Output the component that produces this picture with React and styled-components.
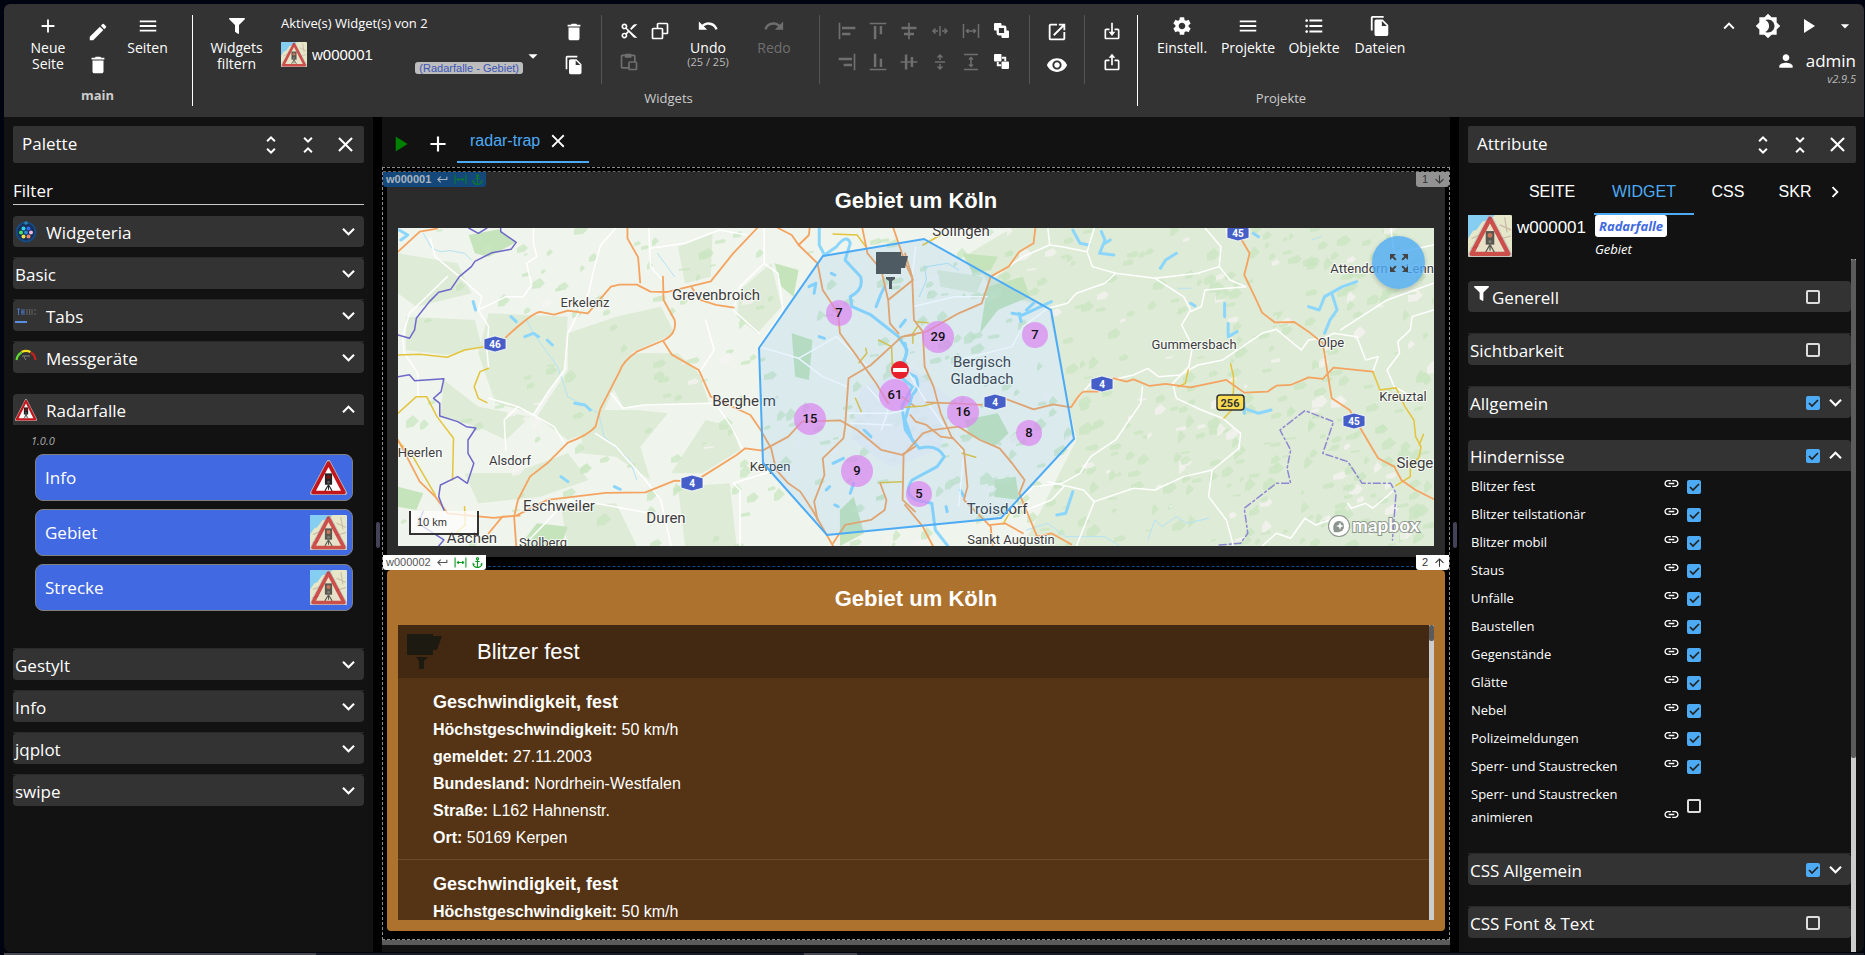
import React from "react";
import styled, { createGlobalStyle, css } from "styled-components";
import {
  MdAdd,
  MdEdit,
  MdDelete,
  MdMenu,
  MdFileCopy,
  MdUndo,
  MdRedo,
  MdOpenInNew,
  MdVisibility,
  MdSettings,
  MdFormatListBulleted,
  MdKeyboardArrowUp,
  MdKeyboardArrowDown,
  MdKeyboardArrowRight,
  MdBrightness4,
  MdPlayArrow,
  MdArrowDropDown,
  MdPerson,
  MdUnfoldMore,
  MdUnfoldLess,
  MdClose,
  MdLink,
  MdAnchor,
  MdKeyboardReturn,
  MdArrowDownward,
  MdArrowUpward,
  MdZoomOutMap,
  MdAlignHorizontalLeft,
  MdAlignHorizontalRight,
  MdAlignHorizontalCenter,
  MdAlignVerticalTop,
  MdAlignVerticalBottom,
  MdAlignVerticalCenter
} from "react-icons/md";
import { BiCut, BiCopy, BiPaste, BiImport, BiExport } from "react-icons/bi";
import { FaFilter } from "react-icons/fa";

const ui = `"Open Sans", "Noto Sans", sans-serif`;
const arial = `"Liberation Sans", Arial, sans-serif`;

const GlobalStyle = createGlobalStyle`
  * {
    box-sizing: border-box;
  }
  body {
    margin: 0;
    background: #000310;
    color: #fff;
    font-family: ${ui};
  }
  button, select, input {
    font: inherit;
    color: inherit;
    margin: 0;
  }
  button {
    background: none;
    border: 0;
    padding: 0;
    cursor: pointer;
  }
  svg {
    display: block;
    flex: none;
  }
`;

const Page = styled.div`
  display: flex;
  flex-direction: column;
  height: 100vh;
  padding: 4px 1px 0 4px;
  overflow: hidden;
`;

/* ---------- toolbar ---------- */

const Toolbar = styled.header`
  display: flex;
  height: 113px;
  flex: none;
  padding: 11px 8px 11px 0;
  background: #333;
  border-radius: 6px 6px 0 0;
`;

const ToolGroup = styled.section`
  display: flex;
  flex-direction: column;
  border-right: ${props => (props.$last ? "0" : "1px solid #fff")};
  padding: ${props => props.$padding};
`;

const ToolRow = styled.div`
  display: flex;
  height: 69px;
`;

const ToolTitle = styled.div`
  padding-top: ${props => (props.$bold ? 3 : 6)}px;
  text-align: center;
  font-size: 13px;
  line-height: 16px;
  color: #ccc;
  font-weight: ${props => (props.$bold ? 700 : 400)};
`;

const BigTool = styled.button`
  display: flex;
  flex-direction: column;
  align-items: center;
  justify-content: flex-start;
  width: ${props => props.$width}px;
  font-size: 14px;
  line-height: 16px;
  color: ${props => (props.disabled ? "#6f6f6f" : "#fff")};

  svg {
    height: 22px;
    margin-bottom: 3px;
  }
  small {
    font-size: 11px;
    line-height: 12px;
    color: #bbb;
  }
`;

const IconGrid = styled.div`
  display: grid;
  grid-template-columns: repeat(${props => props.$cols}, ${props => props.$width || 31}px);
  grid-auto-rows: ${props => props.$row || 31}px;
`;

const IconTool = styled.button`
  display: grid;
  place-items: center;
  color: ${props => (props.disabled ? "#6f6f6f" : "#fff")};
`;

const Divider = styled.div`
  width: 1px;
  background: #555;
  margin: 0 11px 0 12px;
`;

const Picker = styled.div`
  width: 264px;
  margin: 0 13px 0 18px;
`;

const PickerTitle = styled.label`
  display: block;
  font-size: 13px;
  line-height: 16px;
`;

const PickerRow = styled.div`
  display: flex;
  align-items: flex-start;
  padding-top: 11px;

  > svg:last-child {
    align-self: center;
    margin: 0 1px 4px -1px;
  }
`;

const WidgetSelect = styled.select`
  flex: 1;
  min-width: 0;
  height: 24px;
  margin-left: 5px;
  padding: 0;
  border: 0;
  appearance: none;
  background: transparent;
  font-family: ${arial};
  font-size: 15px;
`;

const PickerChip = styled.span`
  margin-top: 20px;
  padding: 0 4px;
  border-radius: 3px;
  background: #bdbdbd;
  color: #3b55b8;
  font-family: ${arial};
  font-size: 11px;
  line-height: 12px;
`;

const Account = styled.div`
  margin-left: auto;
  display: flex;
  flex-direction: column;
  align-items: flex-end;
`;

const AccountIcons = styled.div`
  display: flex;
  align-items: center;
  height: 22px;
  padding-right: 1px;
  gap: 15px;
`;

const AccountName = styled.div`
  display: flex;
  align-items: center;
  gap: 10px;
  margin-top: 12px;
  font-size: 17px;
  line-height: 24px;
`;

const Version = styled.div`
  font-size: 11px;
  line-height: 12px;
  font-style: italic;
  color: #bbb;
`;

/* ---------- workspace ---------- */

const Workspace = styled.div`
  flex: 1;
  min-height: 0;
  display: grid;
  grid-template-columns: 369px 9px minmax(0, 1fr) 9px 405px;
  grid-template-rows: minmax(0, 1fr);
`;

const Splitter = styled.div`
  display: grid;
  place-items: center;
  background: #000;

  &::after {
    content: "";
    width: 4px;
    height: 26px;
    border-radius: 2px;
    background: #444256;
  }
`;

const Panel = styled.aside`
  display: flex;
  flex-direction: column;
  background: #121212;
  padding: ${props => (props.$right ? "9px 8px 0 9px" : "9px 9px 0")};
  border-radius: ${props => (props.$right ? "0 0 6px 0" : "0 0 0 6px")};
`;

const PanelHeader = styled.div`
  display: flex;
  align-items: center;
  flex: none;
  gap: 13px;
  height: 37px;
  padding: 0 6px 0 9px;
  border-radius: 2px;
  background: #333;
  font-size: 17px;
  line-height: 22px;

  span {
    flex: 1;
    padding-bottom: 2px;
  }
`;

const FilterInput = styled.input`
  flex: none;
  height: 30px;
  margin: 12px 0 10px;
  padding: 2px 0 0;
  border: 0;
  border-bottom: 1px solid #c8c8c8;
  background: transparent;
  font-size: 17px;
  outline: none;

  &::placeholder {
    color: #fff;
    opacity: 1;
  }
`;

const Bar = styled.div`
  flex: none;
  height: 32px;
  margin-bottom: ${props => props.$gap}px;
  border-top: 1px solid ${props => (props.$plain ? "transparent" : "#2a2a2a")};
`;

const BarFace = styled.div`
  display: flex;
  align-items: center;
  width: 100%;
  height: 31px;
  padding: 0 ${props => (props.$flush ? 0 : 3)}px 0 2px;
  border-radius: ${props => (props.$open ? "4px 4px 0 0" : "4px")};
  background: #333;
  font-size: 17px;
  line-height: 24px;
  text-align: left;
`;

const BarLabel = styled.span`
  flex: 1;
  padding-top: 2px;
  padding-left: ${props => (props.$icon ? "9px" : "0")};
`;

const FilterMark = styled(FaFilter)`
  margin: 0 3px 6px 4px;
`;

const PaletteVersion = styled.div`
  padding: 7px 0 4px 18px;
  font-size: 11px;
  line-height: 18px;
  font-style: italic;
  color: #aaa;
`;

const WidgetCards = styled.div`
  display: flex;
  flex-direction: column;
  gap: 8px;
  padding: 0 11px 37px 22px;
`;

const WidgetCard = styled.button`
  display: flex;
  align-items: center;
  justify-content: space-between;
  height: 47px;
  padding: 0 5px 0 9px;
  border: 1px solid #808080;
  border-radius: 8px;
  background: #4169e1;
  font-size: 17px;
`;

/* ---------- editor in the middle ---------- */

const Editor = styled.main`
  display: flex;
  flex-direction: column;
  min-width: 0;
  background: #121212;
`;

const EditorTabs = styled.div`
  display: flex;
  align-items: center;
  height: 50px;
  flex: none;
  padding-left: 5px;

  > button {
    padding-top: 4px;
  }
  > button + button {
    margin-left: 12px;
  }
`;

const EditorTab = styled.div`
  display: flex;
  align-items: center;
  gap: 7px;
  width: 132px;
  height: 42px;
  margin-left: 6px;
  padding: 0 13px;
  border-bottom: 2px solid #4dabf5;
  color: #4dabf5;
  font-family: ${arial};
  font-size: 16px;

  button {
    color: #fff;
  }
`;

const Canvas = styled.div`
  flex: 1;
  min-height: 0;
  display: flex;
  flex-direction: column;
  border: 1px dashed #8c8c8c;
  background: #000;
  padding-top: 3px;
`;

const CanvasEnd = styled.div`
  flex: none;
  height: 5px;
  margin-bottom: 7px;
  background: #5b5b5b;
`;

const WidgetFrame = styled.section`
  position: relative;
  border-top: 1px dashed ${props => (props.$list ? "#0f4a8c" : "#666")};
  ${props =>
    props.$list
      ? css`
          flex: 1;
          min-height: 0;
          display: flex;
          margin-top: 9px;
          padding: 3px 4px 8px;
        `
      : css`
          z-index: 1;
          padding: 0 4px;
        `}
`;

const Card = styled.div`
  flex: 1;
  min-width: 0;
  display: flex;
  flex-direction: column;
  padding: 0 11px 11px;
  border-radius: 4px;
  background: ${props => props.$color};
`;

const CardTitle = styled.h2`
  margin: 0;
  flex: none;
  height: ${props => (props.$short ? 55 : 56)}px;
  padding-top: 2px;
  font-family: ${arial};
  font-size: 22px;
  line-height: 54px;
  text-align: center;
`;

const Tag = styled.div`
  position: absolute;
  z-index: 2;
  top: ${props => (props.$back ? "-12px" : "0")};
  ${props => (props.$side === "right" ? "right: 0" : "left: 0")};
  display: flex;
  align-items: center;
  justify-content: ${props => (props.$side === "right" ? "flex-end" : "flex-start")};
  gap: 5px;
  width: ${props => (props.$side === "right" ? 33 : 103)}px;
  height: 15px;
  padding: 0 3px;
  border-radius: 0 0 3px 3px;
  font-family: ${arial};
  font-size: 11px;
  line-height: 15px;
  font-weight: ${props => (props.$bold ? 700 : 400)};
  color: ${props => props.$color};
  background: ${props => props.$background};
`;

const Anchors = styled.span`
  display: flex;
  gap: 4px;
  color: ${props => props.$color};
`;

const MapBox = styled.div`
  position: relative;
  height: 318px;
  overflow: hidden;
  background: #eff4ec;
`;

const ZoomButton = styled.button`
  position: absolute;
  top: 8px;
  right: 9px;
  display: grid;
  place-items: center;
  width: 53px;
  height: 53px;
  border-radius: 50%;
  background: rgba(77, 171, 245, 0.8);
  box-shadow: 0 2px 5px rgba(0, 0, 0, 0.2);
  color: #444;
`;

const Scale = styled.div`
  position: absolute;
  left: 11px;
  bottom: 11px;
  width: 70px;
  height: 24px;
  padding-left: 6px;
  border: 2px solid #333;
  border-top: 0;
  background: rgba(255, 255, 255, 0.75);
  color: #333;
  font-family: ${arial};
  font-size: 11px;
  line-height: 22px;
`;

const Report = styled.div`
  flex: 1;
  min-height: 0;
  display: flex;
  background: #543414;
  font-family: ${arial};
`;

const ReportBody = styled.div`
  flex: 1;
  overflow: hidden;
`;

const ReportHeader = styled.div`
  display: flex;
  align-items: center;
  gap: 35px;
  height: 53px;
  padding-left: 9px;
  background: #432911;
  font-size: 22px;
`;

const ReportItem = styled.article`
  height: 182px;
  padding: 11px 35px;
  border-bottom: 1px solid #6b4a2c;

  h3 {
    margin: 0 0 1px;
    font-size: 18px;
    line-height: 26px;
  }
  p {
    margin: 0;
    font-size: 16px;
    line-height: 27px;
  }
`;

const ScrollTrack = styled.div`
  flex: none;
  width: 5px;
  background: #ccc;

  &::before {
    content: "";
    display: block;
    height: ${props => props.$thumb};
    border-radius: 2px;
    background: #5b5b5b;
  }
`;

/* ---------- attributes ---------- */

const AttributeTabs = styled.div`
  display: flex;
  align-items: center;
  flex: none;
  height: 52px;
  padding-left: 42px;
  overflow: hidden;

  > svg {
    margin: 6px 0 0 -4px;
  }
`;

const AttributeTab = styled.button`
  width: ${props => props.$width}px;
  height: 52px;
  padding-top: 7px;
  overflow: hidden;
  border-bottom: 2px solid ${props => (props.$active ? "#4dabf5" : "transparent")};
  color: ${props => (props.$active ? "#4dabf5" : "#fff")};
  font-family: ${arial};
  font-size: 16px;
`;

const Selected = styled.div`
  display: flex;
  flex: none;
  height: 44px;
`;

const SelectedId = styled.div`
  width: 83px;
  padding-left: 5px;
  font-family: ${arial};
  font-size: 17px;
  line-height: 26px;
`;

const SelectedType = styled.div`
  font-size: 13px;
  font-style: italic;
  line-height: 24px;

  b {
    display: block;
    padding: 0 4px;
    border-radius: 3px;
    background: #fff;
    color: #4169e1;
    line-height: 22px;
  }
`;

const AttributeScroll = styled.div`
  flex: 1;
  min-height: 0;
  display: flex;
`;

const AttributeList = styled.div`
  flex: 1;
  padding-top: 21px;
  overflow: hidden;
`;

const BarTick = styled.div`
  display: flex;
  align-items: center;
  width: 45px;
  gap: 3px;
`;

const Fields = styled.div`
  padding: 1px 0 22px;
`;

const Field = styled.div`
  display: grid;
  grid-template-columns: 180px 36px 1fr;
  align-items: center;
  min-height: 28px;
  padding: 3px 0 2px 3px;
  font-size: 13px;
  line-height: 23px;

  svg {
    align-self: end;
    margin: 0 0 6px 12px;
  }
`;

const tick = `url("data:image/svg+xml,%3Csvg xmlns='http://www.w3.org/2000/svg' viewBox='0 0 14 14'%3E%3Cpath d='M3 7l3 3 6-6' fill='none' stroke='%23222' stroke-width='1.7'/%3E%3C/svg%3E")`;

const Check = styled.input.attrs({ type: "checkbox" })`
  appearance: none;
  width: 14px;
  height: 14px;
  border: 2px solid #ddd;
  border-radius: 2px;

  &:checked {
    border: 0;
    background: #4dabf5 ${tick};
  }
`;

const Footer = styled.div`
  display: flex;
  flex: none;
  height: 2px;
  margin-top: 1px;
  background: #1b1d27;

  &::before {
    content: "";
    width: 312px;
    background: #4a4a4e;
  }
  &::after {
    content: "";
    width: 53px;
    margin-left: 488px;
    background: #4a4a4e;
  }
`;

/* ---------- drawings ---------- */

function Sign({ map, width, height }) {
  return (
    <svg width={width} height={height} viewBox="0 0 36 34" preserveAspectRatio="none">
      {map && (
        <>
          <rect width="36" height="34" rx="1" fill="#e6e6c8" />
          <path d="M0 0h22l-4 4-6 1-5 7-3 1-4 6z" fill="#86cdf2" />
          <path d="M3 19l7-3M26 8l9 4M2 27l8-2M25 20l10-3M30 2l2 12" stroke="#c9b8a8" strokeWidth="1" />
        </>
      )}
      <g opacity={map ? 0.72 : 1}>
        <path
          d="M18 2L34 32H2z"
          fill={map ? "#e6e0c8" : "#fff"}
          stroke="#b9b9b9"
          strokeWidth="4"
          strokeLinejoin="round"
        />
        <path
          d="M18 3L33 31.500H3z"
          fill={map ? "#e6e0c8" : "#fff"}
          stroke="#c4161c"
          strokeWidth="3.500"
          strokeLinejoin="round"
        />
        <rect x="14.500" y="13" width="7" height="11" fill="#222" />
        <circle cx="18" cy="16.500" r="2" fill={map ? "#c04a30" : "#7a1512"} />
        <circle cx="18" cy="21.500" r="1.300" fill="#555" />
        <path d="M18 24v5M18 24l-3.500 6M18 24l3.500 6" stroke="#222" strokeWidth="1" />
      </g>
    </svg>
  );
}

const WidgeteriaIcon = () => (
  <svg width="22" height="22" viewBox="0 0 22 22">
    <circle cx="11" cy="11" r="9.500" fill="#17305a" stroke="#164a80" strokeWidth="2" />
    <circle cx="11" cy="2" r="1.800" fill="#2a86b0" />
    <circle cx="8.500" cy="7.500" r="2" fill="#32d5e8" />
    <circle cx="13.500" cy="7.500" r="2" fill="#2f6cf0" />
    <circle cx="6" cy="11.500" r="2" fill="#45e35c" />
    <circle cx="11" cy="11.500" r="2" fill="#2a8ad8" />
    <circle cx="16" cy="11.500" r="2" fill="#f3b8e0" />
    <circle cx="8.500" cy="15.500" r="2" fill="#efe04a" />
    <circle cx="13.500" cy="15.500" r="2" fill="#f08a6a" />
  </svg>
);

const TabsIcon = () => (
  <svg width="22" height="22" viewBox="0 0 22 22">
    <path d="M2 4h3M3.500 4v6M7 4v6M9 4v6M6 7h3" stroke="#4a76c0" />
    <path d="M12 4v6M14.500 4v6M17 4v6M20 4v2M20 8v2" stroke="#666" />
    <path d="M0 17h12" stroke="#5a8ee0" strokeWidth="2" />
  </svg>
);

const GaugeIcon = () => (
  <svg width="22" height="22" viewBox="0 0 22 22" fill="none" strokeWidth="2.200">
    <path d="M1.500 13A10 10 0 0 1 6.500 5.500" stroke="#5fe02c" />
    <path d="M6.500 5A10 10 0 0 1 15.500 5" stroke="#f4e01c" />
    <path d="M16 5.500A10 10 0 0 1 20.500 13" stroke="#c4201c" />
    <path d="M7 9h8M11 13L9 10" stroke="#888" strokeWidth="1" />
  </svg>
);

const Camera = ({ color = "#1d1a12" }) => (
  <svg width="35" height="35" viewBox="0 0 35 35" fill={color}>
    <path d="M0 0h26v2h9l-5 14h-4v5H0z" />
    <path d="M9 23h12l-4 4v8h-5v-8z" />
  </svg>
);

const CenterGap = ({ turn }) => (
  <svg width="18" height="18" viewBox="0 0 18 18" fill="none" stroke="currentColor" strokeWidth="1.500">
    <g transform={turn ? "rotate(90 9 9)" : undefined}>
      <path d="M9 4v10M7 9H2M4.500 6.500L2 9l2.500 2.500M11 9h5M13.500 6.500L16 9l-2.500 2.500" />
    </g>
  </svg>
);

const FullWidth = ({ turn, size = 18 }) => (
  <svg width={size} height={size} viewBox="0 0 18 18" fill="none" stroke="currentColor" strokeWidth="1.500">
    <g transform={turn ? "rotate(90 9 9)" : undefined}>
      <path d="M1.500 2v14M16.500 2v14M4 9h10M6.500 7L4.500 9l2 2M11.500 7l2 2-2 2" />
    </g>
  </svg>
);

const Order = ({ back }) => (
  <svg width="15" height="15" viewBox="0 0 16 16">
    <rect width="8" height="8" rx="1" fill="currentColor" />
    <rect x="8" y="8" width="8" height="8" rx="1" fill="currentColor" />
    {back ? (
      <path d="M8.500 4H12v3.500M4 8.500V12h3.500" stroke="currentColor" strokeWidth="2" fill="none" />
    ) : (
      <rect x="4" y="4" width="8" height="8" rx="1" fill="#333" stroke="currentColor" strokeWidth="2.500" />
    )}
  </svg>
);

/* ---------- map ---------- */

// the map is drawn in two tiles, each in its own survey coordinates
const west = {
  transform: "translate(-23 -108) scale(0.3444 0.3333)",
  woods: [
    "M330 580L560 590L550 750L460 880L350 850L300 700Z",
    "M560 640L700 590L830 560L870 640L740 700L640 930L560 960L470 890L560 750Z",
    "M720 700L880 700L940 760L970 850L720 860L690 800Z",
    "M880 380L980 340L975 470L900 490Z",
    "M1060 510L1150 430L1180 560L1110 640L1050 590Z",
    "M600 870L760 870L850 880L770 980L800 1080L700 1010L600 1000Z",
    "M260 1060L400 1060L560 1000L620 1080L480 1130L300 1150Z",
    "M67 400L240 430L280 520L120 560L67 520Z",
    "M90 590L290 600L310 680L210 705L90 690Z",
    "M880 1100L1030 1090L1050 1278L900 1278Z",
    "M960 900L1040 920L1060 990L950 1060L860 1060Z",
    "M200 780L300 860L450 890L380 960L300 920L190 890Z",
    "M540 1160L700 1150L760 1278H560Z"
  ],
  forests: [
    "M272 345L360 328L410 367L330 410L290 400Z",
    "M1350 1170L1390 1130L1420 1240L1350 1278Z",
    "M1160 430L1230 450L1215 530L1180 500Z",
    "M1210 640L1270 660L1260 780L1220 770Z",
    "M67 1100L140 1120L120 1170L67 1160Z",
    "M470 1210L560 1220L540 1278H420Z"
  ],
  lanes: [
    "M160 355L175 410L245 470L310 530L300 570L330 620L325 690L330 745",
    "M460 324V370L470 410L440 430L455 495L430 530L380 530L300 570",
    "M210 470L100 580L80 650L85 700L125 760V830",
    "M795 324L800 440L835 480M700 324L655 375L635 450L620 520L560 640L550 750L500 820L460 885L415 860L330 835",
    "M1130 324L1130 430L1060 500L1040 570L1115 640M1130 430L1170 460L1185 570L1115 680L1230 715L1300 770L1370 800",
    "M960 600L985 690L940 760M685 820L720 865L780 855L975 850M460 885L520 920L550 970",
    "M640 940L700 980L785 1080L830 1140L860 1278M975 830L1035 920L1065 985",
    "M430 1278L560 1140L640 1150L800 1180M1060 1278V1110L1040 1090L1165 1050",
    "M800 385L900 370L1000 330L1080 345M380 990L375 900L415 860M1230 715L1340 650L1430 740",
    "M1370 880H1460L1500 880L1540 870M1430 800L1490 870L1470 930M1380 910L1500 915"
  ],
  water: [
    "M285 545L292 570M435 650L460 640L475 650M500 660L515 675",
    "M580 850L610 855L625 870M395 590L410 605M540 1070L560 1085M695 1100L712 1108M70 330L95 345L75 360",
    "M1260 500L1280 490L1275 520M1290 650L1305 655M1310 1110L1320 1100M1390 1090L1380 1120M1420 930L1440 950M1330 1030L1360 1015",
    "M1325 460L1335 465M1455 560L1470 520L1480 500M1540 600L1525 620M1335 1155L1345 1160"
  ],
  streams: [
    "M650 880L665 950L740 1020L760 1080M440 600L460 640L530 740L560 830L650 880M870 470L820 400",
    "M140 340L165 385L190 395L220 392L260 400L280 420"
  ],
  rhine:
    "M1290 324L1290 375L1305 405L1340 380Q1370 340 1380 370L1365 420L1410 470Q1420 510 1380 530L1385 560L1440 585L1520 650L1545 690L1525 770L1560 800L1530 860L1540 930L1568 970",
  county: [
    "M67 705L130 703L210 712L260 690L318 680M330 745L305 755L288 800L300 835L325 848",
    "M67 880L120 830L150 830L180 890L228 955L225 1080M175 1125L110 1010L67 965",
    "M1330 342L1400 345L1425 380M1462 660L1500 680L1502 735M1425 685L1428 700L1405 728",
    "M1395 835L1412 875M1465 1088L1530 1085M260 1160L262 1215L235 1240"
  ],
  motorways: [
    "M67 395L130 335L180 326M733 324L733 355L764 412L770 488",
    "M380 652Q460 575 480 576L520 584L560 572L618 580L685 500L710 494L760 494L800 515L850 516L975 484L1040 400L1110 324",
    "M836 470L838 540L870 600Q878 640 840 660L760 695Q718 725 710 755L655 865L640 920Q620 945 560 968L500 1030L450 1070L415 1140L404 1190L410 1278",
    "M838 665L862 704L940 750L975 830L1090 885L1120 930L1150 985L1165 1050L1200 1090L1235 1115L1270 1170L1330 1278",
    "M920 503L945 540L990 555L1042 563M950 1070L1050 1005L1075 985L1125 992L1200 950L1240 905L1350 901L1400 930L1470 990L1530 1005L1568 980",
    "M885 1083L870 1082L785 1117L670 1119L500 1140L410 1187L345 1194L210 1180L175 1130L130 1085L67 960M420 1187L370 1190L330 1240",
    "M1170 324L1210 345L1230 375L1285 430L1300 510L1345 580L1350 640L1400 710L1455 790L1490 850M1530 830L1568 860",
    "M1230 375L1260 345L1262 324M1415 324L1430 400L1470 450L1490 540L1495 610L1520 640M1505 324L1540 430L1562 480L1490 540",
    "M1568 645L1530 650L1440 735L1375 775L1365 920L1360 955L1300 1015L1305 1065L1275 1145L1285 1200",
    "M1535 1000L1532 1140L1568 1175M1330 1270L1365 1215L1440 1200L1480 1170L1485 1140L1467 1090"
  ],
  border: [
    "M272 324L300 340L325 324M365 324L365 335L410 367L395 388L340 398L290 424L280 440L245 470L220 508L185 517L158 545L120 595L115 630L100 655L67 645",
    "M67 770L100 764L115 782L200 776L192 815L170 835L188 850V888L240 905L265 920L293 924L270 960V1000L287 1030L268 1090L240 1070L190 1095L185 1130L200 1170",
    "M140 1175L125 1210L200 1260L185 1278"
  ]
};

const east = {
  transform: "translate(507 -108) scale(0.3571 0.3333)",
  woods: ["M180 400L300 324H1481V1278H330L480 960L400 560L250 520Z", "M90 450L220 470L200 520L100 500Z"],
  forests: [
    "M230 500L330 470L350 530L260 570L210 640Z",
    "M165 900L260 880L290 940L250 980L180 940Z",
    "M250 1080L310 1070L320 1140L250 1130Z",
    "M160 400L260 410L240 450L190 460Z"
  ],
  lanes: [
    "M400 324L405 375L330 410L250 470M405 375L440 380L510 395L530 324",
    "M510 395L525 440L590 460L700 475L780 530L800 570L775 615L805 680L795 740L750 790L760 835L830 870L890 895L940 940L935 985L860 1050L850 1130L900 1200L920 1278",
    "M840 324L885 380L880 440L820 460L700 475M880 440L910 480L955 500L840 510L830 560L800 575",
    "M590 460L560 490L480 520L455 550L400 565L330 620L300 680L150 720",
    "M480 840L520 790L600 775L640 765L680 745L710 770L770 765L820 735L890 720L1000 640L1040 628L1110 690L1130 660L1170 655L1200 640L1265 650L1290 720L1325 710L1310 755",
    "M665 800L660 850L590 960L520 1010L490 1060L440 1090L360 1100L320 1140M400 1085L500 1110L530 1145L640 1105L700 1110L780 1070L860 1050M530 1145L480 1278",
    "M1480 375L1370 400L1360 324M1480 490L1350 540L1220 630M1480 570L1420 590L1415 630L1380 665L1385 700L1350 750L1370 800L1420 830",
    "M20 560L140 530L230 530M30 380L20 470M0 740L50 830L165 1000L150 1160M340 1170L410 1140L445 1100",
    "M1000 1278L1040 1240L1080 1255L1120 1195L1150 1215L1190 1200M1240 1150L1250 1165L1290 1150L1310 1165L1370 1110"
  ],
  water: [
    "M550 335L560 360L545 400L585 405M575 360L560 370M715 445L730 420L760 400",
    "M300 580L330 585L410 545M320 580L325 605M340 570L360 550",
    "M1130 560L1160 570L1175 530L1225 500L1265 485M1195 520L1210 570L1190 600L1175 640",
    "M905 650L930 635M895 550V590M905 610V650M950 850V880M950 865L990 880L1025 870",
    "M470 1115L450 1180L425 1185M470 330L490 370L515 375M975 340L990 350M155 1110L165 1130M115 1160L118 1175M800 550L812 558"
  ],
  streams: [
    "M60 440L120 430L150 450M40 530L60 480L55 440M340 1230L400 1210L450 1250L560 1250L600 1278M680 1260L700 1200L720 1220L760 1190L790 1210L850 1195M765 505H800M1140 360L1165 350"
  ],
  rhine:
    "M0 670L5 700L-5 730M0 755L30 770Q45 800 20 825L0 900L20 960L40 985Q90 970 110 1010L90 1040L20 1080Q-5 1120 30 1140L75 1150L85 1230L120 1278",
  county: [
    "M0 862L50 858L90 848M30 605L65 608M35 620L22 640V670M295 1175L275 1212M160 1000L198 1012",
    "M1310 755L1330 810L1375 803L1400 860L1425 900L1430 950L1445 980L1440 1010L1415 1045V1070L1375 1097M1452 943L1440 975",
    "M793 750L785 790L765 800M912 732L920 770V810L915 870L893 895M50 375L100 345L110 324"
  ],
  motorways: [
    "M0 400L20 470L25 600L50 635L55 740L80 800L100 880L130 950L165 990L175 1100L165 1140L240 1220L245 1278",
    "M365 324L360 370L320 395L290 440L240 470L215 550L150 580L60 635L0 648",
    "M0 1000L50 940L80 930L150 920L210 960L265 985L300 1030L335 1080L320 1120L370 1250L410 1240L465 1273",
    "M15 885L30 905L60 915L100 950L135 955M60 847L140 850L215 855",
    "M285 838L360 868L415 853L465 862Q490 820 500 815L540 815L560 795L585 775L620 785L640 778L685 798L730 792L800 802L900 780L950 818L1015 815L1040 797L1080 795L1130 772L1170 777L1200 743L1310 755",
    "M943 360L965 400L950 465L975 520L1000 578L1035 607L1090 606L1130 635L1170 670L1185 770L1195 835L1245 870L1325 1015L1370 1040L1390 1080L1430 1110L1480 1137",
    "M0 1155L50 1220L78 1278M240 1215L280 1210L330 1240"
  ],
  border: []
};

const districtBorder =
  "M880 1275L940 1270L960 1240L950 1165L1040 1090L1080 1090L1070 1045L1080 990L1050 930L1120 872L1200 905L1170 1000L1240 1025L1280 1090L1360 1090L1375 1120L1365 1260";

const towns = [
  ["Erkelenz", 187, 79, 13],
  ["Grevenbroich", 318, 72, 15],
  ["Bergheim", 346, 178, 15],
  ["Heerlen", 22, 229, 13],
  ["Alsdorf", 112, 237, 13],
  ["Eschweiler", 161, 283, 15],
  ["Duren", 268, 295, 15],
  ["Aachen", 74, 315, 15],
  ["Stolberg", 145, 319, 13],
  ["Kerpen", 372, 243, 13],
  ["Solingen", 563, 8, 15],
  ["Bergisch", 584, 139, 15],
  ["Gladbach", 584, 156, 15],
  ["Gummersbach", 796, 121, 13],
  ["Olpe", 933, 119, 13],
  ["Kreuztal", 1005, 173, 13],
  ["Siegen", 1021, 240, 15],
  ["Attendorn", 961, 45, 13],
  ["Lennestadt", 1040, 45, 13],
  ["Troisdorf", 599, 286, 15],
  ["Sankt Augustin", 613, 316, 13]
];

const shields = [
  ["46", 97, 116],
  ["4", 294, 255],
  ["4", 597, 174],
  ["4", 704, 156],
  ["45", 840, 5],
  ["45", 956, 193]
];

const clusters = [
  [7, 441, 85, 13],
  [29, 540, 109, 16],
  [7, 637, 107, 13],
  [61, 497, 167, 16],
  [15, 412, 191, 16],
  [16, 565, 184, 16],
  [8, 631, 205, 13],
  [9, 459, 243, 16],
  [5, 521, 266, 13]
];

// small scattered copses, the same ones on every render
function makeCopses(count) {
  let seed = 7;
  const next = () => {
    seed = (seed * 16807) % 2147483647;
    return seed / 2147483647;
  };
  return Array.from({ length: count }, () => {
    const x = Math.round(Math.pow(next(), 0.6) * 1036);
    const y = Math.round(next() * 318);
    const w = 2 + Math.round(next() * 8);
    const h = 1 + Math.round(next() * 5);
    const light = next() > 0.85;
    return { d: `M${x} ${y}l${w} ${-h}l${h} ${h}l${-h} ${h}l${-w} 1z`, light };
  });
}

const copses = makeCopses(620);

const Lines = ({ paths, ...rest }) => (
  <g fill="none" strokeLinejoin="round" strokeLinecap="round" {...rest}>
    {paths.map(d => (
      <path key={d} d={d} vectorEffect="non-scaling-stroke" />
    ))}
  </g>
);

const Ground = ({ tile }) => (
  <g transform={tile.transform}>
    <g fill="#deebd6">
      {tile.woods.map(d => (
        <path key={d} d={d} />
      ))}
    </g>
    <g fill="#c5e4bc">
      {tile.forests.map(d => (
        <path key={d} d={d} />
      ))}
    </g>
  </g>
);

const Tile = ({ tile }) => (
  <g transform={tile.transform}>
    <Lines paths={tile.streams} stroke="#b5e3f5" strokeWidth="1" />
    <Lines paths={tile.water} stroke="#8cd6fb" strokeWidth="3" />
    <Lines paths={[tile.rhine]} stroke="#8cd6fb" strokeWidth="3" />
    <Lines paths={tile.lanes} stroke="#fff" strokeWidth="1.500" />
    <Lines paths={tile.county} stroke="#e3c43c" strokeWidth="1.500" />
    <Lines paths={tile.motorways} stroke="#f4a460" strokeWidth="1.800" />
    <Lines paths={tile.border} stroke="#6e68c8" strokeWidth="1.500" />
  </g>
);

const MapSvg = styled.svg`
  width: 100%;
  height: 100%;
  font-family: Roboto, ${arial};
`;

function RadarMap() {
  return (
    <MapBox>
      <MapSvg viewBox="0 0 1036 318" preserveAspectRatio="xMidYMid slice">
        <Ground tile={west} />
        <Ground tile={east} />
        {copses.map(({ d, light }) => (
          <path key={d} d={d} fill={light ? "#f6f4f2" : "#c9e6c0"} opacity="0.7" />
        ))}
        <path d="M463 160l50-20 40 30-10 50-50 20-40-30z" fill="#eceef4" opacity="0.8" />
        <Tile tile={west} />
        <Tile tile={east} />
        <g transform={east.transform}>
          <Lines paths={[districtBorder]} stroke="#8d88cf" strokeWidth="1.500" strokeDasharray="7 3 2 3" />
        </g>
        <g fill="#3c3c3c" stroke="#fff" strokeOpacity="0.8" strokeWidth="2" paintOrder="stroke" textAnchor="middle">
          {towns.map(([name, x, y, size]) => (
            <text key={name} x={x} y={y} fontSize={size}>
              {name}
            </text>
          ))}
        </g>
        <polygon
          points="425,28 526,11 653,82 676,211 603,290 429,307 365,235 361,120"
          fill="#4dabf5"
          fillOpacity="0.13"
          stroke="#4dabf5"
          strokeWidth="2"
        />
        {shields.map(([name, x, y]) => (
          <g key={`${x}`}>
            <path
              d={`M${x - 11} ${y - 5}l11-3 11 3v10l-11 3-11-3z`}
              fill="#465ec8"
              stroke="#fff"
              strokeWidth="0.800"
            />
            <text x={x} y={y + 4} fontSize="10" fontWeight="700" fill="#fff" textAnchor="middle">
              {name}
            </text>
          </g>
        ))}
        <rect x="819" y="167" width="27" height="15" rx="3" fill="#fbdc52" stroke="#333" strokeWidth="1.500" />
        <text x="832" y="179" fontSize="11" fontWeight="700" fill="#333" textAnchor="middle">
          256
        </text>
        {clusters.map(([count, x, y, r]) => (
          <g key={`${x}`}>
            <circle cx={x} cy={y} r={r} fill="#dc82f0" fillOpacity="0.68" />
            <text x={x} y={y + 4} fontSize="13" fontWeight="500" fill="#111" textAnchor="middle">
              {count}
            </text>
          </g>
        ))}
        <circle cx="502" cy="142" r="9" fill="#e8202c" />
        <rect x="495" y="140" width="14" height="4" fill="#fff" />
        <g fill="#4f5b63">
          <path d="M478 24h25v4h7l-3 12h-4v6h-25z" />
          <path d="M488 49h9v2l-3 2v8h-3v-8l-3-2z" />
        </g>
        <g fill="#fff" stroke="#8c958c" strokeWidth="2" paintOrder="stroke">
          <circle cx="941" cy="298" r="10" />
          <text x="954" y="304" fontSize="19" fontWeight="700" fontFamily="Lato, sans-serif">
            mapbox
          </text>
        </g>
        <path d="M936 304c-2-6 0-11 5-11a5 5 0 0 1 5 5c0 5-4 7-10 6z" fill="#8c958c" />
        <path d="M942 294l1 3 3 1-3 1-1 3-1-3-3-1 3-1z" fill="#fff" />
      </MapSvg>
      <ZoomButton aria-label="Vollbild">
        <MdZoomOutMap size={24} />
      </ZoomButton>
      <Scale>10 km</Scale>
    </MapBox>
  );
}

/* ---------- parts ---------- */

function PanelHead({ title }) {
  return (
    <PanelHeader>
      <span>{title}</span>
      <button aria-label="Alle ausklappen">
        <MdUnfoldMore size={24} />
      </button>
      <button aria-label="Alle einklappen">
        <MdUnfoldLess size={24} />
      </button>
      <button aria-label="Schließen">
        <MdClose size={25} />
      </button>
    </PanelHeader>
  );
}

function PaletteGroup({ label, icon, open, plain, gap = 10 }) {
  return (
    <Bar $gap={gap} $plain={plain}>
      <BarFace as="button" $open={open}>
        {icon}
        <BarLabel $icon={!!icon}>{label}</BarLabel>
        {open ? <MdKeyboardArrowUp size={25} /> : <MdKeyboardArrowDown size={25} />}
      </BarFace>
    </Bar>
  );
}

function AttributeGroup({ label, checked, open, filter, plain }) {
  return (
    <Bar $gap={open ? 0 : 21} $plain={plain}>
      <BarFace $flush $open={open}>
        {filter && <FilterMark size={15} />}
        <BarLabel>{label}</BarLabel>
        <BarTick>
          <Check defaultChecked={checked} aria-label={label} />
          {checked && (
            <button aria-label={`${label} umschalten`}>
              {open ? <MdKeyboardArrowUp size={25} /> : <MdKeyboardArrowDown size={25} />}
            </button>
          )}
        </BarTick>
      </BarFace>
    </Bar>
  );
}

const fields = [
  "Blitzer fest",
  "Blitzer teilstationär",
  "Blitzer mobil",
  "Staus",
  "Unfälle",
  "Baustellen",
  "Gegenstände",
  "Glätte",
  "Nebel",
  "Polizeimeldungen",
  "Sperr- und Staustrecken",
  "Sperr- und Staustrecken animieren"
];

const alignTools = [
  <MdAlignHorizontalLeft size={20} />,
  <MdAlignVerticalTop size={20} />,
  <MdAlignHorizontalCenter size={20} />,
  <CenterGap />,
  <FullWidth />,
  <Order />,
  <MdAlignHorizontalRight size={20} />,
  <MdAlignVerticalBottom size={20} />,
  <MdAlignVerticalCenter size={20} />,
  <CenterGap turn />,
  <FullWidth turn />,
  <Order back />
];

const Radar = () => (
  <ReportItem>
    <h3>Geschwindigkeit, fest</h3>
    <p>
      <b>Höchstgeschwindigkeit:</b> 50 km/h
    </p>
    <p>
      <b>gemeldet:</b> 27.11.2003
    </p>
    <p>
      <b>Bundesland:</b> Nordrhein-Westfalen
    </p>
    <p>
      <b>Straße:</b> L162 Hahnenstr.
    </p>
    <p>
      <b>Ort:</b> 50169 Kerpen
    </p>
  </ReportItem>
);

function Header() {
  return (
    <Toolbar>
      <ToolGroup $padding="0 20px 0 19px">
        <ToolRow>
          <BigTool $width={50}>
            <MdAdd size={22} />
            Neue
            <br />
            Seite
          </BigTool>
          <IconGrid $cols={1} $row={33} $width={50}>
            <IconTool aria-label="Bearbeiten">
              <MdEdit size={22} />
            </IconTool>
            <IconTool aria-label="Löschen">
              <MdDelete size={22} />
            </IconTool>
          </IconGrid>
          <BigTool $width={49}>
            <MdMenu size={22} />
            Seiten
          </BigTool>
        </ToolRow>
        <ToolTitle $bold>main</ToolTitle>
      </ToolGroup>

      <ToolGroup $padding="0 10px 0 17px">
        <ToolRow>
          <BigTool $width={53}>
            <FaFilter size={16} />
            Widgets
            <br />
            filtern
          </BigTool>
          <Picker>
            <PickerTitle htmlFor="widget">Aktive(s) Widget(s) von 2</PickerTitle>
            <PickerRow>
              <Sign map width={26} height={25} />
              <WidgetSelect id="widget">
                <option>w000001</option>
              </WidgetSelect>
              <PickerChip>(Radarfalle - Gebiet)</PickerChip>
              <MdArrowDropDown size={22} />
            </PickerRow>
          </Picker>
          <IconGrid $cols={1} $row={33}>
            <IconTool aria-label="Widget löschen">
              <MdDelete size={22} />
            </IconTool>
            <IconTool aria-label="Widget kopieren">
              <MdFileCopy size={20} />
            </IconTool>
          </IconGrid>
          <Divider />
          <IconGrid $cols={2}>
            <IconTool aria-label="Ausschneiden">
              <BiCut size={20} />
            </IconTool>
            <IconTool aria-label="Kopieren">
              <BiCopy size={20} />
            </IconTool>
            <IconTool disabled aria-label="Einfügen">
              <BiPaste size={20} />
            </IconTool>
          </IconGrid>
          <BigTool $width={66}>
            <MdUndo size={22} />
            Undo
            <small>(25 / 25)</small>
          </BigTool>
          <BigTool $width={66} disabled>
            <MdRedo size={22} />
            Redo
          </BigTool>
          <Divider />
          <IconGrid $cols={6}>
            {alignTools.map((icon, i) => (
              <IconTool key={i} disabled={i % 6 !== 5} aria-label={`Ausrichten ${i + 1}`}>
                {icon}
              </IconTool>
            ))}
          </IconGrid>
          <Divider />
          <IconGrid $cols={1} $row={33}>
            <IconTool aria-label="Im Fenster öffnen">
              <MdOpenInNew size={22} />
            </IconTool>
            <IconTool aria-label="Anzeigen">
              <MdVisibility size={22} />
            </IconTool>
          </IconGrid>
          <Divider />
          <IconGrid $cols={1}>
            <IconTool aria-label="Importieren">
              <BiImport size={20} />
            </IconTool>
            <IconTool aria-label="Exportieren">
              <BiExport size={20} />
            </IconTool>
          </IconGrid>
        </ToolRow>
        <ToolTitle>Widgets</ToolTitle>
      </ToolGroup>

      <ToolGroup $last $padding="0 0 0 11px">
        <ToolRow>
          <BigTool $width={66}>
            <MdSettings size={22} />
            Einstell.
          </BigTool>
          <BigTool $width={66}>
            <MdMenu size={22} />
            Projekte
          </BigTool>
          <BigTool $width={66}>
            <MdFormatListBulleted size={22} />
            Objekte
          </BigTool>
          <BigTool $width={66}>
            <MdFileCopy size={22} />
            Dateien
          </BigTool>
        </ToolRow>
        <ToolTitle>Projekte</ToolTitle>
      </ToolGroup>

      <Account>
        <AccountIcons>
          <MdKeyboardArrowUp size={22} />
          <MdBrightness4 size={26} />
          <MdPlayArrow size={24} />
          <MdArrowDropDown size={20} />
        </AccountIcons>
        <AccountName>
          <MdPerson size={20} />
          admin
        </AccountName>
        <Version>v2.9.5</Version>
      </Account>
    </Toolbar>
  );
}

function Palette() {
  return (
    <Panel>
      <PanelHead title="Palette" />
      <FilterInput placeholder="Filter" aria-label="Filter" />
      <PaletteGroup plain label="Widgeteria" icon={<WidgeteriaIcon />} />
      <PaletteGroup label="Basic" />
      <PaletteGroup label="Tabs" icon={<TabsIcon />} />
      <PaletteGroup label="Messgeräte" icon={<GaugeIcon />} gap={20} />
      <PaletteGroup plain open label="Radarfalle" icon={<Sign width={22} height={22} />} gap={0} />
      <PaletteVersion>1.0.0</PaletteVersion>
      <WidgetCards>
        <WidgetCard>
          Info
          <Sign width={37} height={35} />
        </WidgetCard>
        <WidgetCard>
          Gebiet
          <Sign map width={37} height={35} />
        </WidgetCard>
        <WidgetCard>
          Strecke
          <Sign map width={37} height={35} />
        </WidgetCard>
      </WidgetCards>
      <PaletteGroup label="Gestylt" />
      <PaletteGroup label="Info" />
      <PaletteGroup label="jqplot" />
      <PaletteGroup label="swipe" />
    </Panel>
  );
}

function View() {
  return (
    <Editor>
      <EditorTabs>
        <button aria-label="Start">
          <MdPlayArrow size={26} color="#008000" />
        </button>
        <button aria-label="Neue Ansicht">
          <MdAdd size={26} />
        </button>
        <EditorTab>
          radar-trap
          <button aria-label="Ansicht schließen">
            <MdClose size={22} />
          </button>
        </EditorTab>
      </EditorTabs>
      <Canvas>
        <WidgetFrame>
          <Tag $bold $color="#a9b4bf" $background="#14487a">
            w000001
            <MdKeyboardReturn size={13} />
            <Anchors $color="#0c7a2a">
              <FullWidth size={13} />
              <MdAnchor size={13} />
            </Anchors>
          </Tag>
          <Tag $side="right" $color="#333" $background="#929292">
            1<MdArrowDownward size={13} />
          </Tag>
          <Card $color="#2b2b2b">
            <CardTitle>Gebiet um Köln</CardTitle>
            <RadarMap />
          </Card>
        </WidgetFrame>
        <WidgetFrame $list>
          <Tag $back $color="#555" $background="#fff">
            w000002
            <MdKeyboardReturn size={13} />
            <Anchors $color="#0a9a20">
              <FullWidth size={13} />
              <MdAnchor size={13} />
            </Anchors>
          </Tag>
          <Tag $back $side="right" $color="#333" $background="#fff">
            2<MdArrowUpward size={13} />
          </Tag>
          <Card $color="#ae722f">
            <CardTitle $short>Gebiet um Köln</CardTitle>
            <Report>
              <ReportBody>
                <ReportHeader>
                  <Camera />
                  Blitzer fest
                </ReportHeader>
                <Radar />
                <Radar />
              </ReportBody>
              <ScrollTrack $thumb="16px" />
            </Report>
          </Card>
        </WidgetFrame>
      </Canvas>
      <CanvasEnd />
    </Editor>
  );
}

function Attributes() {
  return (
    <Panel $right>
      <PanelHead title="Attribute" />
      <AttributeTabs>
        <AttributeTab $width={84}>SEITE</AttributeTab>
        <AttributeTab $active $width={100}>
          WIDGET
        </AttributeTab>
        <AttributeTab $width={68}>CSS</AttributeTab>
        <AttributeTab $width={66}>SKR</AttributeTab>
        <MdKeyboardArrowRight size={22} />
      </AttributeTabs>
      <Selected>
        <Sign map width={44} height={42} />
        <SelectedId>w000001</SelectedId>
        <SelectedType>
          <b>Radarfalle</b>
          Gebiet
        </SelectedType>
      </Selected>
      <AttributeScroll>
        <AttributeList>
          <AttributeGroup plain filter label="Generell" />
          <AttributeGroup label="Sichtbarkeit" />
          <AttributeGroup label="Allgemein" checked />
          <AttributeGroup plain open label="Hindernisse" checked />
          <Fields>
            {fields.map((name, i) => (
              <Field key={name}>
                <label htmlFor={`field-${i}`}>{name}</label>
                <MdLink size={17} />
                <Check id={`field-${i}`} defaultChecked={i < fields.length - 1} />
              </Field>
            ))}
          </Fields>
          <AttributeGroup label="CSS Allgemein" checked />
          <AttributeGroup label="CSS Font & Text" />
        </AttributeList>
        <ScrollTrack $thumb="72%" />
      </AttributeScroll>
    </Panel>
  );
}

function App() {
  return (
    <>
      <GlobalStyle />
      <Page>
        <Header />
        <Workspace>
          <Palette />
          <Splitter />
          <View />
          <Splitter />
          <Attributes />
        </Workspace>
        <Footer />
      </Page>
    </>
  );
}

export default App;
